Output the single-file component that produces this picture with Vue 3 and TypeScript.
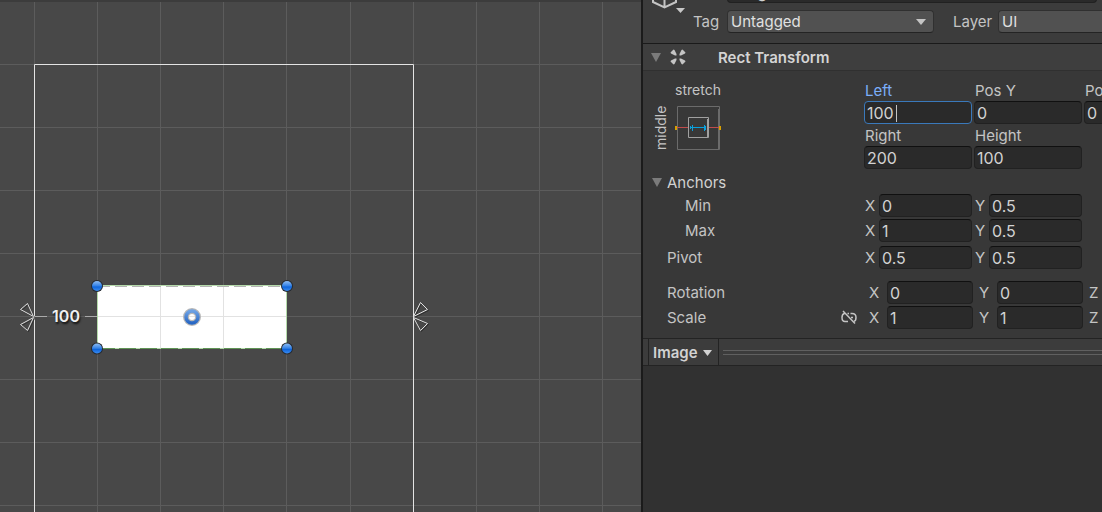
<script setup lang="ts">
import { ref } from 'vue'

interface Axis {
  axis: string
  value: string
}
interface VectorRow {
  label: string
  kind: string
  linked?: boolean
  axes: Axis[]
}

const objectName = ref('Image')
const tag = ref('Untagged')
const layer = ref('UI')

const offsets = ref([
  { id: 'left', label: 'Left', value: '100', active: true },
  { id: 'pos-y', label: 'Pos Y', value: '0', active: false },
  { id: 'pos-z', label: 'Pos Z', value: '0', active: false },
])
const sizes = ref([
  { id: 'right', label: 'Right', value: '200' },
  { id: 'height', label: 'Height', value: '100' },
])
const vectors = ref<VectorRow[]>([
  { label: 'Min', kind: 'nested', axes: [{ axis: 'X', value: '0' }, { axis: 'Y', value: '0.5' }] },
  { label: 'Max', kind: 'nested spaced', axes: [{ axis: 'X', value: '1' }, { axis: 'Y', value: '0.5' }] },
  { label: 'Pivot', kind: 'pivot', axes: [{ axis: 'X', value: '0.5' }, { axis: 'Y', value: '0.5' }] },
  { label: 'Rotation', kind: 'wide rotation', axes: [{ axis: 'X', value: '0' }, { axis: 'Y', value: '0' }, { axis: 'Z', value: '0' }] },
  { label: 'Scale', kind: 'wide spaced', linked: true, axes: [{ axis: 'X', value: '1' }, { axis: 'Y', value: '1' }, { axis: 'Z', value: '1' }] },
])

const gridX = [34, 97, 160, 223, 286, 350, 413, 476, 539, 602]
const gridY = [64, 127, 190, 253, 316, 379, 442, 505]
const handles = [[97, 286], [287, 286], [97, 348.5], [287, 348.5]]
</script>

<template>
  <div class="editor">
    <main class="scene">
      <svg class="canvas" role="img" aria-label="Scene view">
        <defs>
          <linearGradient id="knob" x1="0" y1="0" x2="0" y2="1">
            <stop offset="0" stop-color="#8dbcf2" />
            <stop offset="0.45" stop-color="#3a86e8" />
            <stop offset="0.6" stop-color="#0f66dc" />
            <stop offset="1" stop-color="#3c8cf0" />
          </linearGradient>
          <linearGradient id="ring" x1="0" y1="0" x2="0" y2="1">
            <stop offset="0" stop-color="#6ea2e4" />
            <stop offset="1" stop-color="#2867c4" />
          </linearGradient>
        </defs>
        <g class="grid">
          <line v-for="x in gridX" :key="x" :x1="x + 0.5" y1="0" :x2="x + 0.5" y2="100%" />
          <line v-for="y in gridY" :key="y" x1="0" :y1="y + 0.5" x2="100%" :y2="y + 0.5" />
        </g>
        <path class="frame" d="M34.5 2000V64.5H413.5V2000" />
        <rect x="97" y="286" width="190" height="63" fill="#fff" />
        <path d="M160.5 286v63M223.5 286v63M97 316.5h190" stroke="#e2e2e2" />
        <path d="M97.5 348.5V285.5H286.5V348.5Z" fill="none" stroke="#b5dbab" />
        <path d="M98 286.5H287" stroke="#b4b4b4" stroke-dasharray="12 5" />
        <path d="M98 348.5H287" stroke="#5f9455" stroke-dasharray="17 4" />
        <path class="shadow" d="M28.5 304.5L21.5 310.5L34.5 317.5ZM28.5 331.5L21.5 325.5L34.5 318.5ZM421.5 303.5L428.5 310.5L414.5 317.5ZM421.5 331.5L428.5 324.5L414.5 318.5Z" />
        <path class="anchor" d="M27.5 303.5L20.5 309.5L33.5 316.5ZM27.5 330.5L20.5 324.5L33.5 317.5ZM420.5 302.5L427.5 309.5L413.5 316.5ZM420.5 330.5L427.5 323.5L413.5 317.5Z" />
        <path d="M35 316.5H47M85 316.5H97" stroke="#aaa" />
        <text class="distance" x="66" y="322" text-anchor="middle">100</text>
        <g v-for="([x, y], i) in handles" :key="i">
          <circle :cx="x" :cy="y" r="6" fill="#252a31" />
          <circle :cx="x" :cy="y" r="5" fill="url(#knob)" />
        </g>
        <circle cx="192" cy="317" r="6" fill="none" stroke="#b7b7b7" stroke-width="6" />
        <circle cx="192" cy="317" r="6" fill="none" stroke="url(#ring)" stroke-width="3.5" />
      </svg>
    </main>

    <aside class="inspector">
      <header class="object">
        <button class="object-icon" type="button" aria-label="Object icon">
          <svg width="36" height="36" viewBox="0 0 36 36">
            <path d="M3 8L14.500 2L26 8V25L14.500 30.500L3 25ZM3 8L14.500 14L26 8M14.500 14V30" fill="none" stroke="#c4c4c4" stroke-width="2" />
            <path d="M26 31H35L30.500 36Z" fill="#c8c8c8" />
          </svg>
        </button>
        <div class="object-fields">
          <div class="name-row">
            <input class="enabled" type="checkbox" checked aria-label="Enabled" />
            <input v-model="objectName" class="field name" aria-label="Object name" />
          </div>
          <div class="tag-row">
            <label for="tag">Tag</label>
            <span class="select tag">
              <select id="tag" v-model="tag"><option>Untagged</option></select>
              <svg width="10" height="6" viewBox="0 0 10 6"><path d="M0 0H10L5 6Z" fill="#c4c4c4" /></svg>
            </span>
            <label class="layer-label" for="layer">Layer</label>
            <span class="select layer">
              <select id="layer" v-model="layer"><option>UI</option></select>
            </span>
          </div>
        </div>
      </header>

      <section class="component">
        <h2 class="component-title">
          <button type="button" aria-label="Toggle Rect Transform">
            <svg width="10" height="9" viewBox="0 0 10 9"><path d="M0 0H10L5 9Z" fill="#7b7b7b" /></svg>
          </button>
          <svg class="rect-icon" width="16" height="16" viewBox="0 0 16 16" fill="#c4c4c4">
            <path d="M0.500 3.500L3.500 0.500L4.500 1L6.500 5V6.500H5L1 4.500Z" />
            <path d="M15.500 3.500L12.500 0.500L11.500 1L9.500 5V6.500H11L15 4.500Z" />
            <path d="M0.500 12.500L3.500 15.500L4.500 15L6.500 11V9.500H5L1 11.500Z" />
            <path d="M15.500 12.500L12.500 15.500L11.500 15L9.500 11V9.500H11L15 11.500Z" />
          </svg>
          <span>Rect Transform</span>
        </h2>

        <div class="properties">
          <div class="placement">
            <button class="preset" type="button" aria-label="Anchor presets: middle, stretch">
              <span class="preset-x">stretch</span>
              <span class="preset-y">middle</span>
              <svg class="preset-box" width="46" height="44" viewBox="0 0 46 44" fill="none">
                <path d="M2.500 0.500H44.500V43.500H2.500Z" stroke="#6b6b6b" />
                <path d="M44 3V43" stroke="#6b6b6b" stroke-width="2" />
                <path d="M2 21.500H13M34 21.500H45" stroke="#c04c4c" />
                <path d="M13.500 11.500H33.500V31.500H13.500Z" stroke="#a0a0a0" />
                <path d="M33 13V31" stroke="#a0a0a0" stroke-width="2" />
                <path d="M15 21.500H31M15.500 20V23M17.500 19V25M29.500 19V25M30.500 20V24" stroke="#0aa0dc" />
                <path d="M0 20H2V24H0ZM44 20H46V24H44Z" fill="#d8a000" />
              </svg>
            </button>
            <div class="boxes">
              <div v-for="item in offsets" :key="item.id" class="stack" :class="{ active: item.active }">
                <label :for="item.id">{{ item.label }}</label>
                <span class="entry">
                  <input :id="item.id" v-model="item.value" class="field" />
                  <i v-if="item.active" class="caret"></i>
                </span>
              </div>
              <div v-for="item in sizes" :key="item.id" class="stack second">
                <label :for="item.id">{{ item.label }}</label>
                <span class="entry"><input :id="item.id" v-model="item.value" class="field" /></span>
              </div>
            </div>
          </div>

          <button class="anchors" type="button">
            <svg width="10" height="9" viewBox="0 0 10 9"><path d="M0 0H10L5 9Z" fill="#7b7b7b" /></svg>
            Anchors
          </button>

          <div v-for="row in vectors" :key="row.label" class="vector" :class="row.kind" role="group" :aria-label="row.label">
            <span class="vector-label">{{ row.label }}</span>
            <button v-if="row.linked" class="link" type="button" aria-label="Constrain proportions">
              <svg width="16" height="16" viewBox="0 0 16 16" fill="none" stroke="#c4c4c4" stroke-width="1.500">
                <path d="M3.500 3.500C1.500 4 1 6 1 7.500C1 10 2 11.500 4 11.500H7M6.500 3.500H8M9.500 3.500H11C14 3.500 15 5.500 15 7.500C15 9.500 14.500 11 13 11.300M10 7.500H12M2 1L14 13.500" />
              </svg>
            </button>
            <label v-for="item in row.axes" :key="item.axis" class="axis">
              <span>{{ item.axis }}</span>
              <input v-model="item.value" class="field" :aria-label="row.label + ' ' + item.axis" />
            </label>
          </div>
        </div>
      </section>

      <div class="preview-bar">
        <button type="button">
          Image
          <svg width="9" height="6" viewBox="0 0 9 6"><path d="M0 0H9L4.500 6Z" fill="#d2d2d2" /></svg>
        </button>
        <span class="grip"></span>
      </div>
      <div class="preview"></div>
    </aside>
  </div>
</template>

<style>
body {
  margin: 0;
  background: #313131;
}
</style>

<style scoped>
* {
  box-sizing: border-box;
}
.editor {
  display: grid;
  grid-template-columns: minmax(0, 1fr) 461px;
  min-height: 100vh;
  overflow: hidden;
  font: 15px/20px Inter, "Liberation Sans", sans-serif;
  color: #c4c4c4;
}
button {
  padding: 0;
  border: 0;
  background: none;
  color: inherit;
  font: inherit;
}
svg {
  display: block;
  flex: none;
}
.scene {
  position: relative;
  background: #484848;
}
.scene::before {
  content: "";
  position: absolute;
  inset: 0 0 auto;
  height: 2px;
  background: #3c3c3c;
  z-index: 1;
}
.canvas {
  position: absolute;
  inset: 0;
  width: 100%;
  height: 100%;
}
.grid {
  stroke: #5c5c5c;
}
.frame {
  fill: none;
  stroke: #e4e4e4;
}
.anchor {
  fill: none;
  stroke: #e0e0e0;
}
.shadow {
  fill: none;
  stroke: #303030;
}
.distance {
  fill: #f0f0f0;
  font-weight: 600;
  font-size: 16px;
  text-shadow: 1px 2px 2px #111;
}
.inspector {
  display: flex;
  flex-direction: column;
  min-width: 0;
  overflow: hidden;
  border-left: 2px solid #1b1b1b;
  background: #383838;
}
.field {
  display: block;
  width: 100%;
  min-width: 0;
  height: 23px;
  padding: 1px 2px 0;
  border: 1px solid #212121;
  border-top-color: #101010;
  border-radius: 4px;
  outline: 0;
  background: #2a2a2a;
  color: #d2d2d2;
  font: inherit;
  font-size: 16px;
}
.object {
  display: flex;
  height: 44px;
  overflow: hidden;
  border-bottom: 1px solid #1a1a1a;
  background: #3c3c3c;
}
.object-icon {
  flex: none;
  width: 50px;
  height: 36px;
  margin-top: -23px;
  padding-left: 7px;
}
.object-fields {
  flex: 1;
  min-width: 0;
  margin-top: -20px;
}
.name-row {
  display: flex;
  align-items: center;
  gap: 16px;
  padding: 0 5px 0 10px;
}
.enabled {
  appearance: none;
  flex: none;
  width: 17px;
  height: 17px;
  margin: 0 -9px 0 0;
  border: 1px solid #212121;
  border-radius: 3px;
  background: #2a2a2a;
}
.tag-row {
  display: flex;
  align-items: center;
  margin-top: 7px;
}
.tag-row label {
  flex: none;
  width: 34px;
}
.tag-row .layer-label {
  width: 45px;
  margin-left: 19px;
}
.select {
  display: flex;
  align-items: center;
  flex: none;
  height: 23px;
  padding-right: 7px;
  border: 1px solid #303030;
  border-bottom-color: #242424;
  border-radius: 4px;
  background: #515151;
}
.select select {
  flex: 1;
  appearance: none;
  padding: 0 3px;
  border: 0;
  outline: 0;
  background: none;
  color: #e0e0e0;
  font: inherit;
}
.tag {
  width: 207px;
}
.layer {
  width: 160px;
}
.component-title {
  display: flex;
  align-items: center;
  height: 27px;
  margin: 0;
  padding-left: 8px;
  border-bottom: 1px solid #303030;
  background: #3e3e3e;
  color: #d4d4d4;
  font-size: 15px;
  font-weight: 600;
}
.component-title span {
  padding-top: 2px;
}
.rect-icon {
  margin: 0 32px 0 9px;
}
.properties {
  padding: 9px 0;
}
.placement {
  display: flex;
}
.preset {
  display: grid;
  grid-template-columns: 22px 46px;
  grid-template-rows: 20px 44px;
  row-gap: 6px;
  align-content: start;
  flex: none;
  width: 221px;
  padding-left: 10px;
  font-size: 14px;
}
.preset-x {
  grid-column: 2;
}
.preset-y {
  width: 16px;
  line-height: 16px;
  writing-mode: vertical-rl;
  transform: rotate(180deg);
}
.boxes {
  display: grid;
  grid-template-columns: repeat(3, 108px);
  column-gap: 2px;
}
.stack label {
  display: block;
  padding: 1px 1px 0;
  white-space: nowrap;
}
.second label {
  padding-top: 2px;
}
.active label {
  color: #7baefa;
}
.active .field {
  border-color: #3a79bb;
}
.entry {
  display: block;
  position: relative;
}
.caret {
  position: absolute;
  left: 32px;
  top: 4px;
  width: 1px;
  height: 17px;
  background: #c4c4c4;
}
.anchors {
  display: flex;
  align-items: center;
  gap: 5px;
  height: 23px;
  margin-top: 2px;
  padding-left: 9px;
  color: #d2d2d2;
}
.vector {
  display: grid;
  grid-template-columns: 219px repeat(3, 108px);
  column-gap: 2px;
  align-items: center;
  height: 23px;
}
.vector-label {
  grid-column: 1;
  grid-row: 1;
  padding-left: 24px;
}
.nested .vector-label {
  padding-left: 42px;
}
.spaced {
  margin-top: 2px;
}
.pivot {
  margin-top: 4px;
}
.rotation {
  margin-top: 12px;
}
.wide {
  grid-template-columns: 220px repeat(3, 104px);
  column-gap: 6px;
}
.link {
  grid-column: 1;
  grid-row: 1;
  justify-self: end;
  margin-right: 6px;
}
.axis {
  display: flex;
  align-items: center;
}
.axis span {
  flex: none;
  width: 15px;
  padding-left: 1px;
}
.wide .axis span {
  width: 18px;
  padding-left: 0;
}
.preview-bar {
  display: flex;
  align-items: center;
  height: 28px;
  padding-left: 5px;
  border: solid #232323;
  border-width: 1px 0;
  background: #3c3c3c;
}
.preview-bar button {
  display: flex;
  align-items: center;
  gap: 5px;
  height: 26px;
  padding: 2px 6px 0 4px;
  border: solid #232323;
  border-width: 0 1px;
  color: #d2d2d2;
  font-weight: 600;
}
.grip {
  flex: 1;
  height: 5px;
  margin-left: 4px;
  border: solid #606060;
  border-width: 1px 0;
}
.preview {
  flex: 1;
  background: #313131;
}
</style>
